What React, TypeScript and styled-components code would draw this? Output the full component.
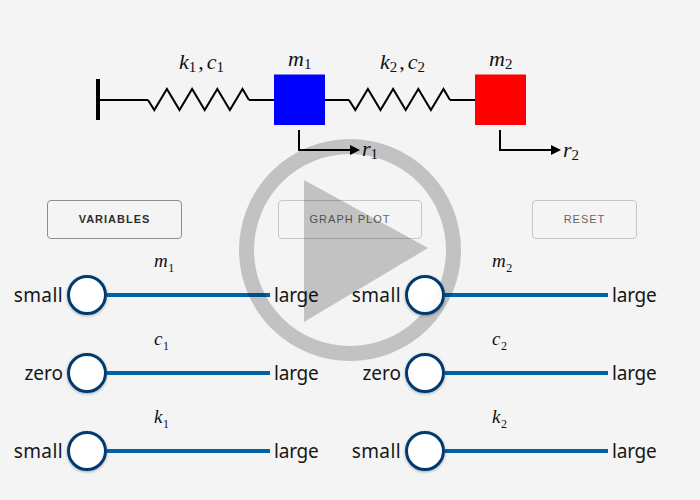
import React from "react";
import styled, { createGlobalStyle } from "styled-components";

const Global = createGlobalStyle`
  html, body { margin: 0; padding: 0; background: #f4f4f4; }
  #root { width: 700px; height: 500px; }
`;

const Page = styled.div`
  position: relative;
  width: 700px;
  height: 500px;
  overflow: hidden;
  background: #f4f4f4;
  display: flex;
  flex-direction: column;
  padding-top: 40px;
  box-sizing: border-box;
`;

const Diagram = styled.svg`
  display: block;
  width: 700px;
  height: 130px;
  flex: none;
`;

const MathLabel = styled.text`
  font-family: "Liberation Serif", "DejaVu Serif", serif;
  font-style: italic;
  font-size: 22px;
  fill: #111;
`;

const Sub = styled.tspan`
  font-style: normal;
  font-size: 15px;
`;

const Toolbar = styled.div`
  display: flex;
  align-items: flex-start;
  height: 39px;
  margin-top: 30px;
  padding-left: 47px;
  flex: none;
`;

const ActionButton = styled.button<{ $w: number; $ml: number; $active?: boolean }>`
  width: ${(p) => p.$w}px;
  height: 39px;
  margin-left: ${(p) => p.$ml}px;
  padding: 0 0 2px;
  box-sizing: border-box;
  background: transparent;
  border: 1px solid ${(p) => (p.$active ? "#8d8d8d" : "#c6c6c6")};
  border-radius: 4px;
  font-family: "Liberation Sans", Arial, sans-serif;
  font-size: 11px;
  letter-spacing: 1px;
  font-weight: ${(p) => (p.$active ? 700 : 400)};
  color: ${(p) => (p.$active ? "#2d2d2d" : "#666")};
`;

const SliderGrid = styled.div`
  display: grid;
  grid-template-columns: 338px 338px;
  grid-auto-rows: 78px;
  margin-top: 8px;
  flex: none;
`;

const SliderCell = styled.div`
  display: flex;
  flex-direction: column;
`;

const SliderTitle = styled.div`
  height: 28px;
  line-height: 28px;
  padding-left: 154px;
  font-family: "Liberation Serif", serif;
  font-style: italic;
  font-size: 19px;
  letter-spacing: 0.6px;
  color: #111;
  sub {
    font-style: normal;
    font-size: 12px;
    line-height: 0;
  }
`;

const SliderRow = styled.div`
  display: flex;
  align-items: center;
  height: 40px;
`;

const EndLabel = styled.span<{ $left?: boolean; $wide?: boolean }>`
  font-family: "Noto Sans", "Open Sans", sans-serif;
  font-size: 19px;
  color: #161616;
  letter-spacing: ${(p) => (p.$wide ? "0.4px" : p.$left ? "0" : "-0.2px")};
  width: ${(p) => (p.$left ? "63px" : "auto")};
  text-align: ${(p) => (p.$left ? "right" : "left")};
  margin-left: ${(p) => (p.$left ? "0" : "4px")};
`;

const Knob = styled.div`
  position: relative;
  z-index: 2;
  flex: none;
  width: 40px;
  height: 40px;
  margin-left: 4px;
  box-sizing: border-box;
  background: rgba(255, 255, 255, 0.92);
  border: 3px solid #003a70;
  border-radius: 50%;
  box-shadow: 0 1px 3px rgba(0, 0, 0, 0.3);
`;

const Track = styled.div`
  width: 163px;
  height: 4px;
  background: #0063a6;
`;

const PlayOverlay = styled.svg`
  position: absolute;
  z-index: 1;
  left: 239px;
  top: 139px;
  width: 222px;
  height: 222px;
  opacity: 0.2;
`;

const spring = (start: number) => {
  const pts: string[] = [`${start},100`];
  for (let i = 0; i < 8; i++) {
    pts.push(`${start + 6.3 + i * 12.6},${i % 2 ? 89 : 110}`);
  }
  pts.push(`${start + 101},100`);
  return pts.join(" ");
};

const sliders = [
  ["m", "1", "small"],
  ["m", "2", "small"],
  ["c", "1", "zero"],
  ["c", "2", "zero"],
  ["k", "1", "small"],
  ["k", "2", "small"],
];

export default function App() {
  return (
    <Page>
      <Global />
      <Diagram viewBox="0 40 700 130">
        <rect x={96} y={79} width={4} height={41} fill="#000" />
        <polyline points="100,100 148,100" fill="none" stroke="#000" strokeWidth={2} />
        <polyline points={spring(148)} fill="none" stroke="#000" strokeWidth={2} />
        <line x1={249} y1={100} x2={274} y2={100} stroke="#000" strokeWidth={2} />
        <line x1={325} y1={100} x2={349} y2={100} stroke="#000" strokeWidth={2} />
        <polyline points={spring(349)} fill="none" stroke="#000" strokeWidth={2} />
        <line x1={450} y1={100} x2={475} y2={100} stroke="#000" strokeWidth={2} />
        <rect x={274} y={74.5} width={51} height={50.5} fill="#0000ff" />
        <rect x={475} y={74.5} width={51} height={50.5} fill="#ff0000" />
        <polyline points="299,130 299,150 351,150" fill="none" stroke="#000" strokeWidth={2} />
        <polygon points="350,145 360,150 350,155" fill="#000" />
        <polyline points="500,130 500,150 552,150" fill="none" stroke="#000" strokeWidth={2} />
        <polygon points="551,145 561,150 551,155" fill="#000" />
        <MathLabel x={179} y={69}>k<Sub dy={3}>1</Sub><tspan dy={-3} dx={2} fontStyle="normal">,</tspan><tspan dx={3}>c</tspan><Sub dy={3}>1</Sub></MathLabel>
        <MathLabel x={288} y={66}>m<Sub dy={3}>1</Sub></MathLabel>
        <MathLabel x={380} y={69}>k<Sub dy={3}>2</Sub><tspan dy={-3} dx={2} fontStyle="normal">,</tspan><tspan dx={3}>c</tspan><Sub dy={3}>2</Sub></MathLabel>
        <MathLabel x={489} y={66}>m<Sub dy={3}>2</Sub></MathLabel>
        <MathLabel x={362} y={156}>r<Sub dy={3}>1</Sub></MathLabel>
        <MathLabel x={563} y={157}>r<Sub dy={3}>2</Sub></MathLabel>
      </Diagram>
      <Toolbar>
        <ActionButton $w={135} $ml={0} $active>VARIABLES</ActionButton>
        <ActionButton $w={144} $ml={96}>GRAPH PLOT</ActionButton>
        <ActionButton $w={105} $ml={110}>RESET</ActionButton>
      </Toolbar>
      <SliderGrid>
        {sliders.map(([v, s, low]) => (
          <SliderCell key={v + s}>
            <SliderTitle>
              {v}
              <sub>{s}</sub>
            </SliderTitle>
            <SliderRow>
              <EndLabel $left $wide={low === "small"}>{low}</EndLabel>
              <Knob />
              <Track />
              <EndLabel>large</EndLabel>
            </SliderRow>
          </SliderCell>
        ))}
      </SliderGrid>
      <PlayOverlay viewBox="0 0 222 222">
        <circle cx={111} cy={111} r={103.5} fill="none" stroke="#000" strokeWidth={15} />
        <polygon points="65,41 65,183 189,109" fill="#000" />
      </PlayOverlay>
    </Page>
  );
}
